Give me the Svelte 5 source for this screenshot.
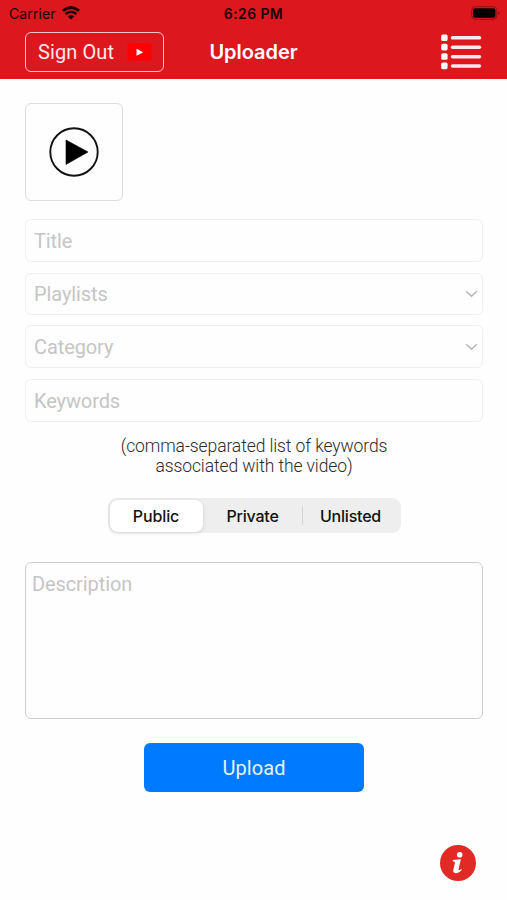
<script>
  const fields = [
    { label: 'Title', kind: 'title', select: false },
    { label: 'Playlists', kind: 'playlists', select: true },
    { label: 'Category', kind: 'category', select: true },
    { label: 'Keywords', kind: 'keywords', select: false }
  ];
  const options = ['Public', 'Private', 'Unlisted'];
  let selected = $state('Public');
</script>

<div class="screen">
  <header>
    <div class="status">
      <div class="carrier">
        <span>Carrier</span>
        <svg width="18" height="14" viewBox="0 0 18 14">
          <path d="M.9 4.9Q9-1.8 17.1 4.9" fill="none" stroke="#1b0203" stroke-width="3" />
          <path d="M3.6 8Q9 3.6 14.4 8" fill="none" stroke="#1b0203" stroke-width="2.4" />
          <path d="M5.9 10.4Q9 7.8 12.1 10.4L9 13.4Z" fill="#1b0203" />
        </svg>
      </div>
      <div class="time">6:26 PM</div>
      <svg class="battery" width="30" height="14" viewBox="0 0 30 14">
        <rect x=".7" y=".7" width="25" height="12.6" rx="3.6" fill="none" stroke="#8f1015" stroke-width="1" />
        <rect x="2" y="2.2" width="22.4" height="9.6" rx="2.2" fill="#080000" />
        <path d="M27.3 5v4q1.6-.8 1.6-2t-1.6-2Z" fill="#8f1015" />
      </svg>
    </div>
    <nav>
      <button class="signout">
        <span>Sign Out</span>
        <svg width="25" height="18" viewBox="0 0 25 18">
          <rect x=".5" y=".5" width="24" height="17" rx="2.5" fill="#f00" />
          <path d="M9.5 5.7v7l6.7-3.5Z" fill="#fff" />
        </svg>
      </button>
      <h1>Uploader</h1>
      <svg class="list" width="42" height="36" viewBox="0 0 42 36" fill="#fff">
        {#each [0, 9.4, 18.8, 28.2] as y}
          <rect x="1.2" y={y + 0.4} width="6.4" height="6.6" rx="1.6" />
          <rect x="10.8" y={y + 2.1} width="30.4" height="3.5" rx="1.7" fill="#ffe9ee" />
        {/each}
      </svg>
    </nav>
  </header>

  <main>
    <div class="thumb">
      <svg width="50" height="50" viewBox="0 0 50 50">
        <circle cx="25" cy="25" r="23.7" fill="none" stroke="#111" stroke-width="1.9" />
        <path d="M17 13v24.4L39 25Z" fill="#000" stroke="#000" stroke-width=".6" stroke-linejoin="round" />
      </svg>
    </div>

    {#each fields as f}
      <div class="field {f.kind}">
        <span>{f.label}</span>
        {#if f.select}
          <svg width="13" height="8" viewBox="0 0 13 8">
            <path d="M1.2 1.2 6.5 6.3 11.8 1.2" fill="none" stroke="#b5b5b5" stroke-width="1.5" />
          </svg>
        {/if}
      </div>
    {/each}

    <p>(comma-separated list of keywords<br />associated with the video)</p>

    <div class="segments">
      {#each options as o}
        <button class:active={selected === o} onclick={() => (selected = o)}>{o}</button>
      {/each}
    </div>

    <div class="description">Description</div>
    <button class="upload">Upload</button>
    <svg class="info" width="38" height="38" viewBox="0 0 38 38">
      <circle cx="19" cy="19" r="18" fill="#e12a25" />
      <circle cx="20.7" cy="10.7" r="2.8" fill="#fff" />
      <path d="M13.8 16.1 21.9 15.3 19.6 25.1Q19.3 26.6 20.4 26.2L22.4 25 22.8 25.8Q20.2 29.3 16.5 29.2Q13.6 29 14.4 25.6L16 18.7Q16.3 17.2 13.8 17.2Z" fill="#fff" />
    </svg>
  </main>
</div>

<style>
  :global(body) { margin: 0; background: #fefefe; }
  .screen { width: 507px; height: 900px; background: #fefefe; overflow: hidden; font-family: Roboto, sans-serif; }
  button { margin: 0; padding: 0; border: 0; background: none; font: inherit; color: inherit; }
  svg { display: block; flex: none; }
  header { height: 79px; background: #dc171d; }
  .status { height: 27px; display: grid; grid-template-columns: 1fr auto 1fr; align-items: center; font: 14px/27px Inter, sans-serif; color: #1b0203; }
  .carrier { display: flex; align-items: center; gap: 6px; padding-left: 9px; letter-spacing: .1px; }
  .carrier svg { margin-top: -1px; }
  .time { font-weight: 600; letter-spacing: .4px; }
  .battery { justify-self: end; margin: -1px 6px 0 0; }
  nav { height: 52px; display: grid; grid-template-columns: 1fr auto 1fr; align-items: center; }
  .signout { box-sizing: border-box; width: 139px; height: 40px; margin: -2px 0 0 25px; padding: 0 11px 0 12px; border: 1.5px solid #ffc3cb; border-radius: 6px; display: flex; align-items: center; justify-content: space-between; color: #ffe9ee; font-size: 20px; letter-spacing: .1px; }
  h1 { margin: -2px 0 0; color: #fff; font: 600 20px/26px Inter, sans-serif; letter-spacing: -.05px; }
  .list { justify-self: end; margin: -2px 25px 0 0; }
  main { display: flex; flex-direction: column; padding: 24px 24px 0 25px; }
  .thumb { box-sizing: border-box; width: 98px; height: 98px; border: 1.5px solid #dcdcdc; border-radius: 6px; display: flex; align-items: center; justify-content: center; margin-bottom: 18px; }
  .field { box-sizing: border-box; height: 43px; border: 1.5px solid #f0f0f0; border-radius: 6px; padding: 0 4px 0 8px; display: flex; align-items: center; justify-content: space-between; color: #c5c5c5; font-size: 20px; letter-spacing: -.1px; }
  .playlists { height: 42px; margin-top: 11px; }
  .category { margin-top: 10px; }
  .keywords { margin-top: 11px; }
  p { margin: 14px 0 0; text-align: center; font-size: 17.5px; line-height: 20px; font-weight: 300; letter-spacing: -.1px; color: #2c2c2c; }
  .segments { box-sizing: border-box; align-self: center; width: 293px; height: 35px; margin-top: 22px; padding: 2px; border-radius: 9px; background: #eeeeef; display: grid; grid-template-columns: 93px 100px 96px; }
  .segments button { font: 500 16px/32px Inter, sans-serif; letter-spacing: -.2px; color: #111; position: relative; }
  .segments .active { background: #fff; border-radius: 8px; box-shadow: 0 1px 4px #0002; letter-spacing: -.1px; }
  .segments button:last-child::before { content: ''; position: absolute; left: -1px; top: 6px; width: 1px; height: 19px; background: #d4d4d6; }
  .description { box-sizing: border-box; height: 157px; margin-top: 29px; border: 1.5px solid #cfcfcf; border-radius: 6px; padding: 9px 6px; color: #c5c5c5; font-size: 20px; line-height: 24px; letter-spacing: -.1px; }
  .upload { align-self: center; width: 220px; height: 49px; margin-top: 24px; border-radius: 6px; background: #007aff; color: #e6f4ff; font-size: 20px; letter-spacing: .1px; }
  .info { align-self: flex-end; margin: 52px 6px 0 0; }
</style>
